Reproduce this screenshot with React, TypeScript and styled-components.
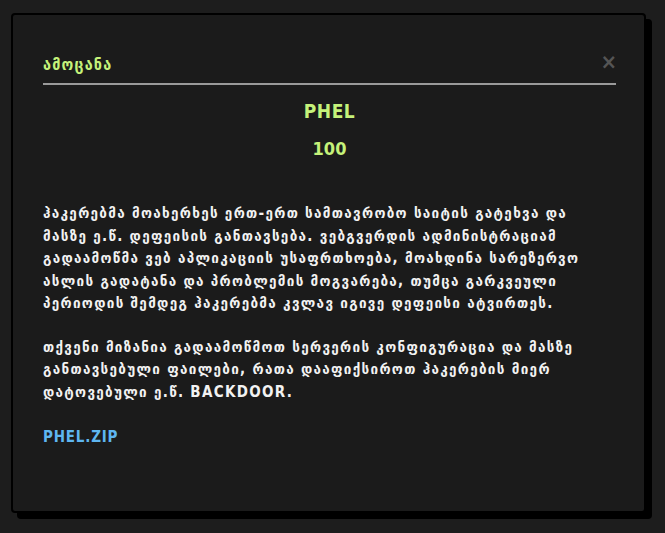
import React from "react";
import styled, {createGlobalStyle} from "styled-components";

const GlobalStyle = createGlobalStyle`
  html, body {
    margin: 0;
    padding: 0;
    background: #1d1d1d;
  }
  body {
    font-family: "DejaVu Sans Condensed", "DejaVu Sans", sans-serif;
  }
`

const Page = styled.div`
  width: 665px;
  height: 533px;
  padding: 13px 0 0 11px;
  box-sizing: border-box;
`

const Modal = styled.div`
  width: 635px;
  height: 500px;
  box-sizing: border-box;
  background: #1b1b1b;
  border: 2px solid #000;
  border-radius: 4px;
  box-shadow: 6px 6px 0 #000;
  padding: 0 28px 0 30px;
  display: flex;
  flex-direction: column;
`

const Header = styled.div`
  height: 70px;
  box-sizing: border-box;
  display: flex;
  align-items: flex-end;
  justify-content: space-between;
  border-bottom: 2px solid #9a9a9a;
  padding-bottom: 8px;
`

const Title = styled.h2`
  margin: 0;
  font-size: 16px;
  line-height: 20px;
  font-weight: bold;
  color: #c5f27a;
  letter-spacing: 1.2px;
`

const Close = styled.span`
  color: #555;
  font-size: 22px;
  font-weight: bold;
  line-height: 20px;
  margin-bottom: 3px;
  margin-right: -1px;
`

const Name = styled.div`
  text-align: center;
  color: #c5f27a;
  font-size: 19px;
  line-height: 20px;
  font-weight: bold;
  letter-spacing: 0.5px;
  margin-top: 16px;
`

const Points = styled.div`
  text-align: center;
  color: #c5f27a;
  font-size: 18px;
  line-height: 18px;
  font-weight: bold;
  margin-top: 19px;
`

const Description = styled.p<{$gap: number}>`
  margin: ${p => p.$gap}px 0 0;
  color: #f2f2f2;
  font-size: 15px;
  font-weight: bold;
  line-height: 22.5px;
  letter-spacing: 1.3px;
  white-space: nowrap;
`

const FileLink = styled.a`
  display: block;
  margin-top: 23px;
  color: #5eb6f0;
  font-size: 15px;
  line-height: 22px;
  font-weight: bold;
  text-decoration: none;
  letter-spacing: 0.8px;
  align-self: flex-start;
`

export default function App() {
    return (
        <Page>
            <GlobalStyle/>
            <Modal>
                <Header>
                    <Title>ამოცანა</Title>
                    <Close>×</Close>
                </Header>
                <Name>PHEL</Name>
                <Points>100</Points>
                <Description $gap={44}>
                    ჰაკერებმა მოახერხეს ერთ-ერთ სამთავრობო საიტის გატეხვა და<br/>
                    მასზე ე.წ. დეფეისის განთავსება. ვებგვერდის ადმინისტრაციამ<br/>
                    გადაამოწმა ვებ აპლიკაციის უსაფრთხოება, მოახდინა სარეზერვო<br/>
                    ასლის გადატანა და პრობლემის მოგვარება, თუმცა გარკვეული<br/>
                    პერიოდის შემდეგ ჰაკერებმა კვლავ იგივე დეფეისი ატვირთეს.
                </Description>
                <Description $gap={21}>
                    თქვენი მიზანია გადაამოწმოთ სერვერის კონფიგურაცია და მასზე<br/>
                    განთავსებული ფაილები, რათა დააფიქსიროთ ჰაკერების მიერ<br/>
                    დატოვებული ე.წ. BACKDOOR.
                </Description>
                <FileLink href="#">PHEL.ZIP</FileLink>
            </Modal>
        </Page>
    );
}
